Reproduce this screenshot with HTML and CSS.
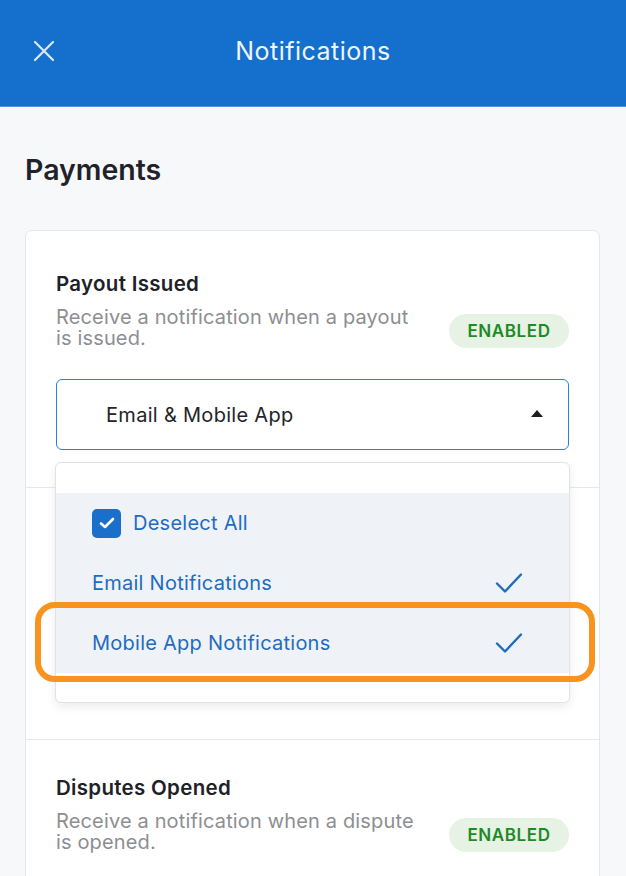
FILE: index.html
```html
<!DOCTYPE html>
<html lang="en">
<head>
<meta charset="utf-8">
<title>Notifications</title>
<link rel="stylesheet" href="styles.css">
</head>
<body>
<header class="topbar">
  <div class="topbar-left">
    <svg class="close-icon" width="22" height="22" viewBox="0 0 22 22"><path d="M2 2 L20 20 M20 2 L2 20" stroke="#dce9f8" stroke-width="2.2" stroke-linecap="round" fill="none"/></svg>
  </div>
  <div class="topbar-title">Notifications</div>
  <div></div>
</header>

<main class="content">
  <h1 class="section-title">Payments</h1>
  <div class="card">
    <section class="item item-first">
      <div class="item-title">Payout Issued</div>
      <div class="item-row">
        <p class="item-desc">Receive a notification when a payout is issued.</p>
        <span class="badge">ENABLED</span>
      </div>
      <div class="select-wrap">
        <div class="select">
          <span class="select-value">Email &amp; Mobile App</span>
          <svg class="caret" width="12" height="7" viewBox="0 0 12 7"><path d="M0 7 L6 0 L12 7 Z" fill="#1e1e1e"/></svg>
        </div>
        <div class="menu">
          <div class="menu-list">
            <div class="menu-row">
              <span class="checkbox"><svg width="18" height="14" viewBox="0 0 18 14"><path d="M3 7.5 L7 11 L15 3" stroke="#fff" stroke-width="2.6" fill="none" stroke-linecap="round" stroke-linejoin="round"/></svg></span>
              <span class="menu-label">Deselect All</span>
            </div>
            <div class="menu-row menu-row-split">
              <span class="menu-label">Email Notifications</span>
              <svg class="tick" width="28" height="22" viewBox="0 0 28 22"><path d="M2 11.5 L10 19.5 L26 2.5" stroke="#1f6cbf" stroke-width="2.4" fill="none" stroke-linecap="round" stroke-linejoin="round"/></svg>
            </div>
            <div class="menu-row menu-row-split">
              <span class="menu-label">Mobile App Notifications</span>
              <svg class="tick" width="28" height="22" viewBox="0 0 28 22"><path d="M2 11.5 L10 19.5 L26 2.5" stroke="#1f6cbf" stroke-width="2.4" fill="none" stroke-linecap="round" stroke-linejoin="round"/></svg>
            </div>
          </div>
          <div class="highlight"></div>
        </div>
      </div>
    </section>
    <section class="item item-hidden"></section>
    <section class="item item-last">
      <div class="item-title">Disputes Opened</div>
      <div class="item-row">
        <p class="item-desc">Receive a notification when a dispute is opened.</p>
        <span class="badge">ENABLED</span>
      </div>
    </section>
  </div>
</main>
</body>
</html>
```

FILE: styles.css
```css
* { box-sizing: border-box; }
html, body { margin: 0; padding: 0; }
body {
  background: #f7f8fa;
  font-family: "Inter", "Noto Sans", sans-serif;
  width: 626px;
  height: 876px;
  overflow: hidden;
}
.topbar {
  height: 107px;
  background: #1470cc;
  border-bottom: 1px solid #4d94de;
  display: grid;
  grid-template-columns: 1fr auto 1fr;
  align-items: center;
  padding-bottom: 4px;
}
.topbar-left { padding-left: 33px; display: flex; align-items: center; }
.close-icon { display: block; }
.topbar-title {
  color: #eef5fd;
  font-size: 25px;
  font-weight: 400;
  letter-spacing: 0.5px;
}
.content { padding: 46px 26px 0 25px; }
.section-title {
  margin: 0;
  font-size: 28.5px;
  line-height: 34px;
  font-weight: 600;
  color: #1f2329;
  letter-spacing: 0;
}
.card {
  margin-top: 43px;
  background: #fff;
  border: 1px solid #e4e6ea;
  border-radius: 7px;
}
.item { padding: 0 30px; border-top: 1px solid #e6e8eb; }
.item-first { border-top: none; padding-top: 41px; padding-bottom: 37px; }
.item-hidden { height: 252px; }
.item-last { padding-top: 36px; padding-bottom: 40px; }
.item-title {
  font-size: 20.5px;
  line-height: 24px;
  font-weight: 600;
  color: #1e2126;
  letter-spacing: 0.3px;
}
.item-row {
  display: flex;
  align-items: center;
  justify-content: space-between;
  margin-top: 11px;
}
.item-desc {
  margin: 0;
  width: 362px;
  font-size: 20px;
  line-height: 21px;
  color: #8d8e92;
  font-weight: 400;
  letter-spacing: 0.15px;
}
.badge {
  width: 120px;
  height: 34px;
  margin-top: 5px;
  border-radius: 17px;
  background: #e6f3e4;
  color: #1e8a26;
  font-size: 17px;
  font-weight: 600;
  display: flex;
  align-items: center;
  justify-content: center;
  letter-spacing: 0.6px;
}
.select-wrap { position: relative; margin-top: 30px; }
.select {
  height: 71px;
  border: 1.5px solid #2f7fd0;
  border-radius: 6px;
  display: flex;
  align-items: center;
  justify-content: space-between;
  padding: 0 25px 0 49px;
}
.select-value { font-size: 20px; color: #222428; letter-spacing: 0.3px; }
.caret { display: block; margin-top: -2px; }
.menu {
  position: absolute;
  top: 83px;
  left: -1px;
  width: 515px;
  height: 241px;
  background: #fff;
  border: 1px solid #dfe2e6;
  border-radius: 6px;
  box-shadow: 0 4px 10px rgba(0,0,0,0.08);
  padding-top: 30px;
  z-index: 2;
}
.menu-list { background: #eff3f8; }
.menu-row {
  height: 60px;
  display: flex;
  align-items: center;
  padding: 0 46px 0 36px;
  gap: 12px;
}
.menu-row-split { justify-content: space-between; }
.menu-label { font-size: 20px; color: #1f6cbf; letter-spacing: 0.25px; }
.checkbox {
  width: 29px;
  height: 29px;
  border-radius: 5px;
  background: #1a6fca;
  display: flex;
  align-items: center;
  justify-content: center;
}
.checkbox svg { display: block; }
.tick { display: block; }
.highlight {
  position: absolute;
  left: -21px;
  top: 139px;
  width: 560px;
  height: 80px;
  border: 6px solid #f7931e;
  border-radius: 20px;
}
```
